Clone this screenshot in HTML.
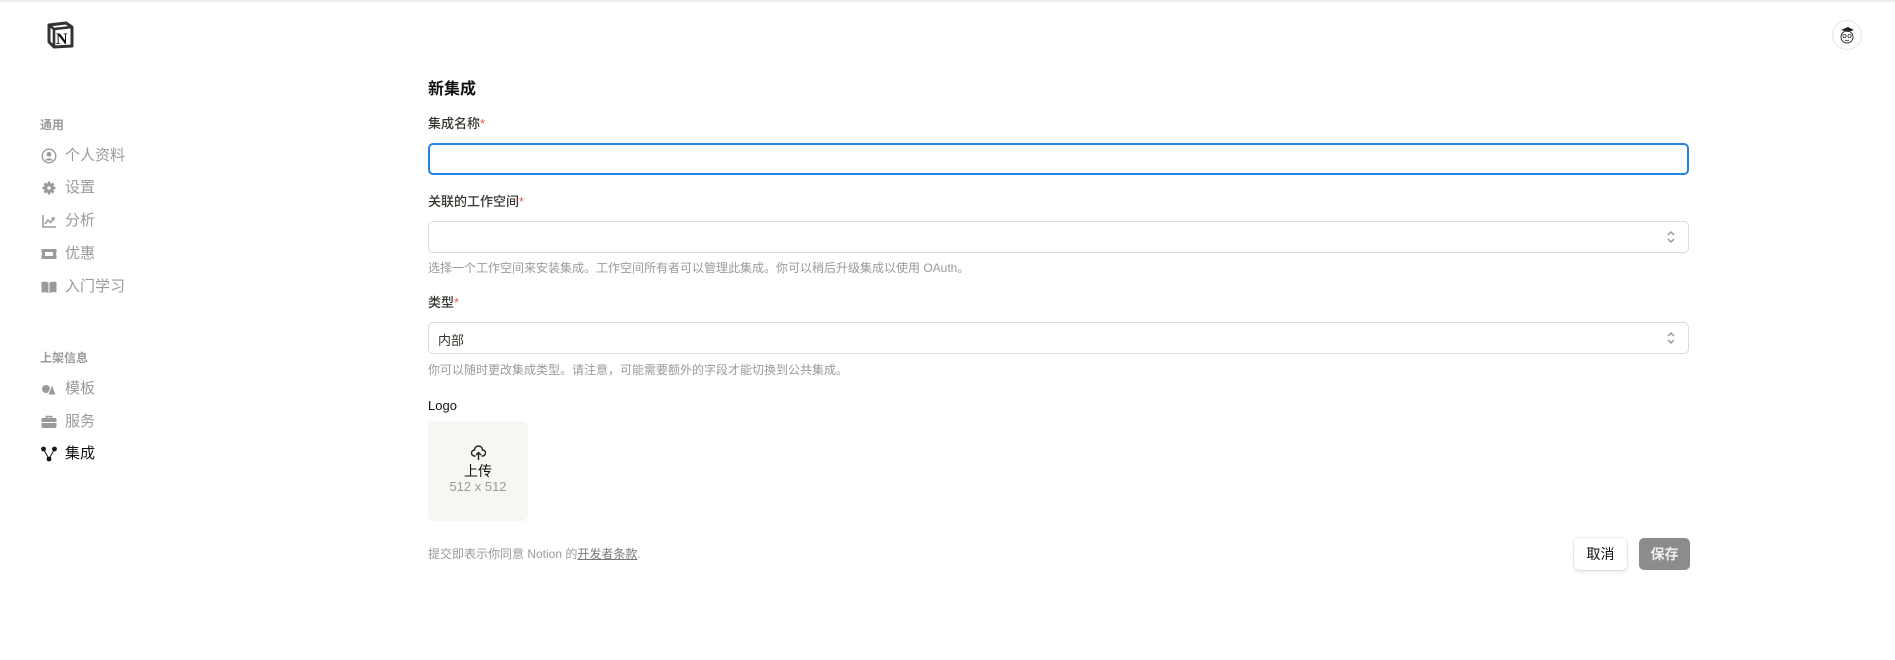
<!DOCTYPE html>
<html><head><meta charset="utf-8"><style>
*{box-sizing:border-box;margin:0;padding:0}
body{width:1895px;height:660px;background:#fff;font-family:"Liberation Sans","Noto Sans CJK SC",sans-serif;color:#37352f;position:relative;overflow:hidden;border-top:2px solid #ededed}
.a{position:absolute;white-space:nowrap}
.lbl{font-size:12px;font-weight:600;color:#9b9a97}
.it{font-size:15px;color:#9b9a97;left:65px;line-height:20px}
.ic{position:absolute;left:41px;width:16px;height:16px}
.fl{font-size:13px;color:#37352f;font-weight:500;left:428px;line-height:18px}
.fl b{color:#eb5757;font-weight:400}
.inp{position:absolute;left:428px;width:1261px;height:32px;border:1px solid #dcdbd8;border-radius:5px}
.help{font-size:12px;color:#9b9a97;left:428px;line-height:16px}
.chev{position:absolute;right:12px;top:8px}
</style></head><body>
<svg class="a" style="left:46px;top:18px" width="29" height="29" viewBox="0 0 29 29"><path d="M3 5 L20 3 L26 7 L26 26 L8 27 L3 22 Z" fill="#fff" stroke="#333" stroke-width="3" stroke-linejoin="round"/><path d="M3 5 L8 9 L26 7 M8 9 L8 27" fill="none" stroke="#333" stroke-width="2.6"/><text x="10" y="24" font-family="Liberation Serif" font-weight="bold" font-size="16" fill="#111">N</text></svg>
<div class="a" style="left:1832px;top:18px;width:30px;height:30px;border-radius:50%;border:1px solid #e6e6e6;background:#fff"><svg width="28" height="28" viewBox="0 0 28 28"><path d="M8 9 L15 6 L21 9 L15 11 Z" fill="#222"/><circle cx="14" cy="16" r="6" fill="none" stroke="#333" stroke-width="1"/><circle cx="11.5" cy="15" r="1.6" fill="none" stroke="#333" stroke-width=".8"/><circle cx="16.5" cy="15" r="1.6" fill="none" stroke="#333" stroke-width=".8"/><path d="M12 19 q2 1.5 4 0" stroke="#333" fill="none" stroke-width=".8"/></svg></div>

<div class="a lbl" style="left:40px;top:114px">通用</div>
<svg class="ic" style="top:146px" viewBox="0 0 16 16"><circle cx="8" cy="8" r="6.8" fill="none" stroke="#9b9a97" stroke-width="1.4"/><circle cx="8" cy="6.3" r="2.4" fill="#9b9a97"/><path d="M3.8 12.5 q4.2-4.5 8.4 0" fill="#9b9a97"/></svg>
<div class="a it" style="top:144px">个人资料</div>
<svg class="ic" style="top:178px" viewBox="0 0 16 16"><circle cx="8" cy="8" r="5" fill="#9b9a97"/><g stroke="#9b9a97" stroke-width="2.6"><path d="M8 1.5V14.5M1.5 8H14.5M3.4 3.4L12.6 12.6M12.6 3.4L3.4 12.6"/></g><circle cx="8" cy="8" r="1.8" fill="#fff"/></svg>
<div class="a it" style="top:176px">设置</div>
<svg class="ic" style="top:211px" viewBox="0 0 16 16"><path d="M2 2V14H15M4 11L7 7L9.5 9.5L13 5M10.5 5H13V7.5" fill="none" stroke="#9b9a97" stroke-width="1.5"/></svg>
<div class="a it" style="top:209px">分析</div>
<svg class="ic" style="top:244px" viewBox="0 0 16 16"><path d="M0.5 3H15.5V6.5Q14 8 15.5 9.5V13H0.5V9.5Q2 8 0.5 6.5Z" fill="#9b9a97"/><rect x="4" y="6" width="8" height="4" fill="#fff"/></svg>
<div class="a it" style="top:242px">优惠</div>
<svg class="ic" style="top:277px" viewBox="0 0 16 16"><path d="M0.5 3Q4 2 7.5 3.5V14Q4 12.5 0.5 13.5Z M8.5 3.5Q12 2 15.5 3V13.5Q12 12.5 8.5 14Z" fill="#9b9a97"/></svg>
<div class="a it" style="top:275px">入门学习</div>

<div class="a lbl" style="left:40px;top:347px">上架信息</div>
<svg class="ic" style="top:379px" viewBox="0 0 16 16"><circle cx="5" cy="8" r="4" fill="#9b9a97"/><path d="M7 14L11 3L15 14Z" fill="#9b9a97" stroke="#fff" stroke-width="1"/></svg>
<div class="a it" style="top:377px">模板</div>
<svg class="ic" style="top:412px" viewBox="0 0 16 16"><path d="M5.5 4V2.5H10.5V4" fill="none" stroke="#9b9a97" stroke-width="1.5"/><rect x="0.5" y="4" width="15" height="10" rx="1.5" fill="#9b9a97"/><path d="M0.5 8.5H15.5" stroke="#fff" stroke-width="1"/></svg>
<div class="a it" style="top:410px">服务</div>
<svg class="ic" style="top:444px" viewBox="0 0 16 16"><path d="M2.5 3L8 13L13.5 3" fill="none" stroke="#111" stroke-width="1"/><circle cx="2.5" cy="3" r="2.4" fill="#111"/><circle cx="13.5" cy="3" r="2.4" fill="#111"/><circle cx="8" cy="13" r="2.4" fill="#111"/></svg>
<div class="a it" style="top:442px;color:#111">集成</div>

<div class="a" style="left:428px;top:77px;font-size:16px;font-weight:700;color:#111;line-height:22px">新集成</div>
<div class="a fl" style="top:113px">集成名称<b>*</b></div>
<div class="inp" style="top:141px;border:2px solid #2383e2;height:32px"></div>
<div class="a fl" style="top:191px">关联的工作空间<b>*</b></div>
<div class="inp" style="top:219px"><svg class="chev" width="10" height="14" viewBox="0 0 10 14"><path d="M2 5L5 2L8 5M2 9L5 12L8 9" fill="none" stroke="#9b9a97" stroke-width="1.5"/></svg></div>
<div class="a help" style="top:258px">选择一个工作空间来安装集成。工作空间所有者可以管理此集成。你可以稍后升级集成以使用 OAuth。</div>
<div class="a fl" style="top:292px">类型<b>*</b></div>
<div class="inp" style="top:320px"><span style="position:absolute;left:9px;top:7px;font-size:13px;color:#37352f">内部</span><svg class="chev" width="10" height="14" viewBox="0 0 10 14"><path d="M2 5L5 2L8 5M2 9L5 12L8 9" fill="none" stroke="#9b9a97" stroke-width="1.5"/></svg></div>
<div class="a help" style="top:360px">你可以随时更改集成类型。请注意，可能需要额外的字段才能切换到公共集成。</div>
<div class="a fl" style="top:395px;font-weight:400;color:#111">Logo</div>
<div class="a" style="left:428px;top:419px;width:100px;height:100px;background:#f7f6f3;border-radius:6px;text-align:center">
<svg style="position:absolute;left:43px;top:24px" width="15" height="15" viewBox="0 0 15 15"><path d="M4.5 11H3.5A3 3 0 0 1 3.5 5A4 4 0 0 1 11.5 5A3 3 0 0 1 11.5 11H10.5" fill="none" stroke="#222" stroke-width="1.4"/><path d="M7.5 15V7.5M5 10L7.5 7.5L10 10" fill="none" stroke="#222" stroke-width="1.4"/></svg>
<div style="position:absolute;left:0;right:0;top:40px;font-size:14px;color:#111">上传</div>
<div style="position:absolute;left:0;right:0;top:58px;font-size:13px;color:#9b9a97">512 x 512</div>
</div>
<div class="a help" style="top:544px">提交即表示你同意 Notion 的<span style="text-decoration:underline;color:#787774">开发者条款</span>.</div>
<div class="a" style="left:1574px;top:536px;width:53px;height:32px;border-radius:5px;background:#fff;box-shadow:0 0 0 1px rgba(15,15,15,.06),0 2px 4px rgba(15,15,15,.1);font-size:14px;color:#111;text-align:center;line-height:32px">取消</div>
<div class="a" style="left:1639px;top:536px;width:51px;height:32px;border-radius:5px;background:#8c8c8c;font-size:14px;color:#eee;font-weight:600;text-align:center;line-height:32px">保存</div>
</body></html>
